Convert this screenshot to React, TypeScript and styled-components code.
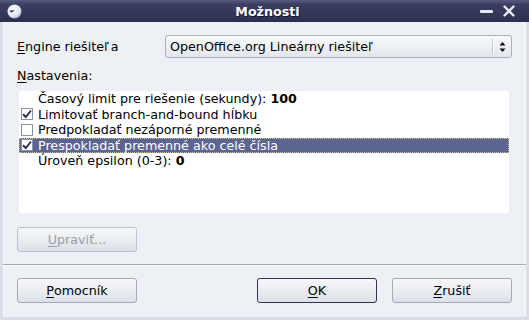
import React from "react";
import styled, { createGlobalStyle } from "styled-components";

const Global = createGlobalStyle`
  html, body { margin: 0; padding: 0; }
  body {
    width: 529px; height: 320px; overflow: hidden;
    font-family: "DejaVu Sans", "Liberation Sans", sans-serif;
    font-size: 12.7px; color: #000;
  }
`;

const Win = styled.div`
  width: 529px; height: 320px;
  display: flex; flex-direction: column;
  background: #d9dee6;
`;

const TitleBar = styled.div`
  height: 22px; flex: none;
  display: grid; grid-template-columns: 1fr auto 1fr; align-items: center;
  background: linear-gradient(#565b82 0%, #3a3e62 20%, #2c304f 100%);
  color: #fff;
`;

const Title = styled.div`
  font-weight: bold; font-size: 12.7px;
  text-shadow: 1px 1px 0 #14162a;
  padding-left: 6px;
`;

const TitleLeft = styled.div`display: flex; align-items: center; padding-left: 7px;`;
const TitleRight = styled.div`
  display: flex; align-items: center; justify-content: flex-end;
  gap: 10px; padding-right: 14px;
`;

const Body = styled.div`
  flex: 1; display: flex; flex-direction: column;
  margin: 0 3px 3px 3px;
  background: #edf0f5;
  box-shadow: inset 1px 0 0 #f7f9fb, inset -1px 0 0 #f7f9fb;
  padding: 13px 14px 13px 14px;
`;

const EngineRow = styled.div`
  display: grid; grid-template-columns: 148px 1fr; align-items: center;
`;

const Label = styled.div`line-height: 15px;`;
const U = styled.span`text-decoration: underline; text-underline-offset: 2px;`;
const Caron = styled.span`letter-spacing: 2px;`;

const Combo = styled.div`
  height: 23px; box-sizing: border-box;
  border: 1px solid #a8b0bb; border-radius: 3px;
  background: linear-gradient(#f8f9fa, #e3e7ec);
  display: flex; align-items: center;
  padding-left: 4px;
`;
const ComboText = styled.div`flex: 1; white-space: nowrap;`;
const ComboSep = styled.div`
  width: 1px; align-self: stretch; margin: 3px 0;
  background: #c3c9d1; box-shadow: 1px 0 0 #fbfcfd;
`;
const ComboArrows = styled.div`width: 18px; display: flex; justify-content: center;`;

const SettingsLabel = styled(Label)`margin-top: 10px;`;

const List = styled.div`
  margin: 8px 3px 0 2px; height: 122px;
  background: #fff; display: flex; flex-direction: column;
`;

const Row = styled.div<{ $sel?: boolean }>`
  height: 15.5px; box-sizing: border-box;
  display: flex; align-items: center;
  padding-left: 1px;
  white-space: nowrap;
  background: ${(p) => (p.$sel ? "#5c6590" : "transparent")};
  color: ${(p) => (p.$sel ? "#fff" : "#000")};
  border: 1px dotted ${(p) => (p.$sel ? "#c9c38f" : "transparent")};
`;
const Slot = styled.div`width: 17px; display: flex; align-items: center; flex: none;`;
const Box = styled.div`
  width: 12px; height: 12px; box-sizing: border-box;
  border: 1px solid #8a93a7; background: #fff;
  display: flex; align-items: center; justify-content: center;
`;

const Btn = styled.div<{ $w?: number; $disabled?: boolean; $default?: boolean }>`
  width: ${(p) => p.$w ?? 120}px; height: 25px; box-sizing: border-box;
  border: 1px solid ${(p) => (p.$default ? "#2f3454" : p.$disabled ? "#bcc3cc" : "#a3abb6")};
  border-radius: 3px;
  background: linear-gradient(#f7f8fa, #dde1e7);
  display: flex; align-items: center; justify-content: center;
  color: ${(p) => (p.$disabled ? "#9aa0aa" : "#000")};
  flex: none;
`;

const EditRow = styled.div`margin-top: 14px; display: flex;`;
const Sep = styled.div`
  margin: 12px -14px 0 -14px; height: 1px;
  background: #a5a9b1; box-shadow: 0 1px 0 #fafbfc;
`;
const Buttons = styled.div`margin-top: 13px; display: flex; gap: 15px;`;
const Spacer = styled.div`flex: 1;`;

const Check = () => (
  <svg width="10" height="10" viewBox="0 0 10 10">
    <path d="M1 5.2 L3.8 8 L9 1.5" fill="none" stroke="#2b3055" strokeWidth="2" />
  </svg>
);

const AppIcon = () => (
  <svg width="15" height="15" viewBox="0 0 15 15">
    <defs>
      <radialGradient id="g" cx="40%" cy="35%" r="70%">
        <stop offset="0" stopColor="#ffffff" />
        <stop offset="0.7" stopColor="#dfe6f2" />
        <stop offset="1" stopColor="#9aa5c2" />
      </radialGradient>
    </defs>
    <circle cx="7.5" cy="7.5" r="7" fill="url(#g)" />
    <path d="M2.5 7 Q5 5.5 8 6.6 Q6 7.2 4.5 8.4 Z" fill="#1e2238" />
  </svg>
);

const Minimize = () => (
  <svg width="13" height="5" viewBox="0 0 13 5">
    <rect x="0" y="1" width="13" height="3" rx="1" fill="#e8eaf2" />
  </svg>
);
const Close = () => (
  <svg width="12" height="12" viewBox="0 0 12 12">
    <path d="M1.5 1.5 L10.5 10.5 M10.5 1.5 L1.5 10.5" stroke="#e8eaf2" strokeWidth="2.4" strokeLinecap="round" />
  </svg>
);
const Arrows = () => (
  <svg width="7" height="12" viewBox="0 0 7 12">
    <path d="M3.5 1 L6.5 4.5 L0.5 4.5 Z" fill="#111" />
    <path d="M0.5 7.5 L6.5 7.5 L3.5 11 Z" fill="#111" />
  </svg>
);

export default function App() {
  return (
    <>
      <Global />
      <Win>
        <TitleBar>
          <TitleLeft><AppIcon /></TitleLeft>
          <Title>Možnosti</Title>
          <TitleRight><Minimize /><Close /></TitleRight>
        </TitleBar>
        <Body>
          <EngineRow>
            <Label><U>E</U>ngine riešite<Caron>ľ</Caron>a</Label>
            <Combo>
              <ComboText>OpenOffice.org Lineárny riešiteľ</ComboText>
              <ComboSep />
              <ComboArrows><Arrows /></ComboArrows>
            </Combo>
          </EngineRow>
          <SettingsLabel><U>N</U>astavenia:</SettingsLabel>
          <List>
            <Row><Slot /><span>Časový limit pre riešenie (sekundy): <b>100</b></span></Row>
            <Row><Slot><Box><Check /></Box></Slot><span>Limitovať branch-and-bound hĺbku</span></Row>
            <Row><Slot><Box /></Slot><span>Predpokladať nezáporné premenné</span></Row>
            <Row $sel><Slot><Box><Check /></Box></Slot><span>Prespokladať premenné ako celé čísla</span></Row>
            <Row><Slot /><span>Úroveň epsilon (0-3): <b>0</b></span></Row>
          </List>
          <EditRow><Btn $disabled><U>U</U>praviť...</Btn></EditRow>
          <Sep />
          <Buttons>
            <Btn><U>P</U>omocník</Btn>
            <Spacer />
            <Btn $default><U>O</U>K</Btn>
            <Btn><U>Z</U>rušiť</Btn>
          </Buttons>
        </Body>
      </Win>
    </>
  );
}
